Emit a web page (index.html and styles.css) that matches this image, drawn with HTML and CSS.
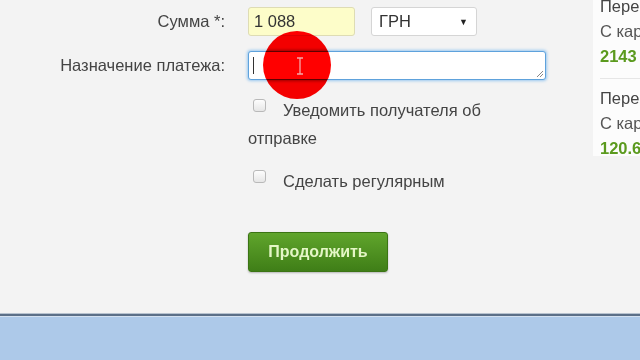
FILE: index.html
```html
<!DOCTYPE html>
<html lang="ru">
<head>
<meta charset="utf-8">
<title>Платеж</title>
<link rel="stylesheet" href="styles.css">
</head>
<body>
<div class="page">
  <main class="main">
    <form class="form">
      <label class="label row1">Сумма *:</label>
      <div class="field row1 inline">
        <div class="input amount">1 088</div>
        <div class="select">ГРН<span class="arrow">▼</span></div>
      </div>
      <label class="label row2">Назначение платежа:</label>
      <div class="field row2">
        <div class="textarea"><span class="caret"></span>
          <svg class="grip" width="9" height="9" viewBox="0 0 9 9"><path d="M8 2 L2 8 M8 5 L5 8" stroke="#888" stroke-width="1"/></svg>
        </div>
      </div>
      <div class="field checks">
        <div class="check first"><span class="box"></span>Уведомить получателя об отправке</div>
        <div class="check second"><span class="box"></span>Сделать регулярным</div>
        <button type="button" class="btn">Продолжить</button>
      </div>
    </form>
    <aside class="side">
      <div class="item">
        <div>Перевод</div>
        <div class="muted">С карты</div>
        <div class="sum">2143</div>
      </div>
      <div class="item">
        <div>Перевод</div>
        <div class="muted">С карты</div>
        <div class="sum">120.60</div>
      </div>
    </aside>
    <div class="click">
      <svg width="68" height="68" viewBox="0 0 68 68"><path d="M34 27 h6 M37 27 v16 M34 43 h6" stroke="#f4a8a8" stroke-width="1.3" fill="none"/></svg>
    </div>
  </main>
  <footer class="bar"></footer>
</div>
</body>
</html>
```
FILE: styles.css
```css
html, body { margin: 0; padding: 0; }
body {
  width: 640px; height: 360px; overflow: hidden;
  font-family: "Liberation Sans", Arial, sans-serif;
  font-size: 16.5px; color: #444;
}
.page { display: flex; flex-direction: column; height: 360px; }
.main {
  position: relative;
  height: 313px;
  background: #f3f3f3;
  display: flex;
  overflow: hidden;
}
.form {
  display: grid;
  grid-template-columns: 225px 300px;
  column-gap: 23px;
  align-content: start;
  padding-top: 7px;
  width: 593px;
  flex: none;
}
.label {
  text-align: right;
  color: #444;
  display: flex; align-items: center; justify-content: flex-end;
}
.row1 { height: 29px; }
.row2 { height: 29px; margin-top: 15px; }
.inline { display: flex; gap: 16px; }
.input, .select {
  box-sizing: border-box;
  height: 29px;
  display: flex; align-items: center;
  border-radius: 3px;
}
.amount {
  width: 107px;
  background: #fdfdc9;
  border: 1px solid #dedcb4;
  padding-left: 5px;
  color: #333;
}
.select {
  width: 106px;
  background: #fff;
  border: 1px solid #d5d5d5;
  padding: 0 8px 0 7px;
  justify-content: space-between;
  color: #333;
}
.arrow { font-size: 9px; color: #222; }
.textarea {
  position: relative;
  box-sizing: border-box;
  width: 298px; height: 29px;
  background: #fff;
  border: 1px solid #5ea2dc;
  border-radius: 3px;
  box-shadow: 0 0 3px 1px #9ac8f0;
  display: flex; align-items: center;
  padding-left: 4px;
}
.caret { width: 1px; height: 17px; background: #333; }
.grip { position: absolute; right: 1px; bottom: 1px; }
.checks {
  grid-column: 2;
  display: flex; flex-direction: column; align-items: flex-start;
  padding-top: 16px;
}
.check {
  line-height: 28px;
  color: #444;
  width: 270px;
}
.second { margin-top: 15px; }
.box {
  display: inline-block;
  box-sizing: border-box;
  width: 13px; height: 13px;
  border: 1px solid #b9b9b9;
  border-radius: 3px;
  background: linear-gradient(#fdfdfd, #e6e6e6);
  margin: 0 17px 0 5px;
  vertical-align: 4px;
}
.btn {
  margin-top: 37px;
  width: 140px; height: 40px;
  border: 1px solid #3b7414;
  border-radius: 3px;
  background: linear-gradient(#60a52c, #3f7e17);
  color: #e4f6c6;
  font-family: "Liberation Sans", Arial, sans-serif;
  font-size: 16px;
  font-weight: bold;
  box-shadow: 0 1px 2px rgba(0,0,0,0.25);
  padding: 0;
}
.side {
  flex: none;
  width: 47px;
  height: 162px;
  background: #fcfcfc;
  padding-left: 7px;
  margin-top: -6px;
  white-space: nowrap;
  color: #444;
}
.item { line-height: 25px; }
.item + .item { border-top: 1px solid #e6e6e6; margin-top: 9px; padding-top: 7px; }
.muted { color: #555; }
.sum { color: #5b9a1e; font-weight: bold; }
.click {
  position: absolute;
  left: 263px; top: 31px;
  width: 68px; height: 68px;
  border-radius: 50%;
  background: #ff0000;
  mix-blend-mode: multiply;
}
.click svg { display: block; }
.bar {
  flex: 1;
  background: #adc9e9;
  border-top: 1px solid #b7c2cf;
  box-shadow: inset 0 2px 0 #5b6f88, inset 0 3px 0 #d2e0f0;
}
```
